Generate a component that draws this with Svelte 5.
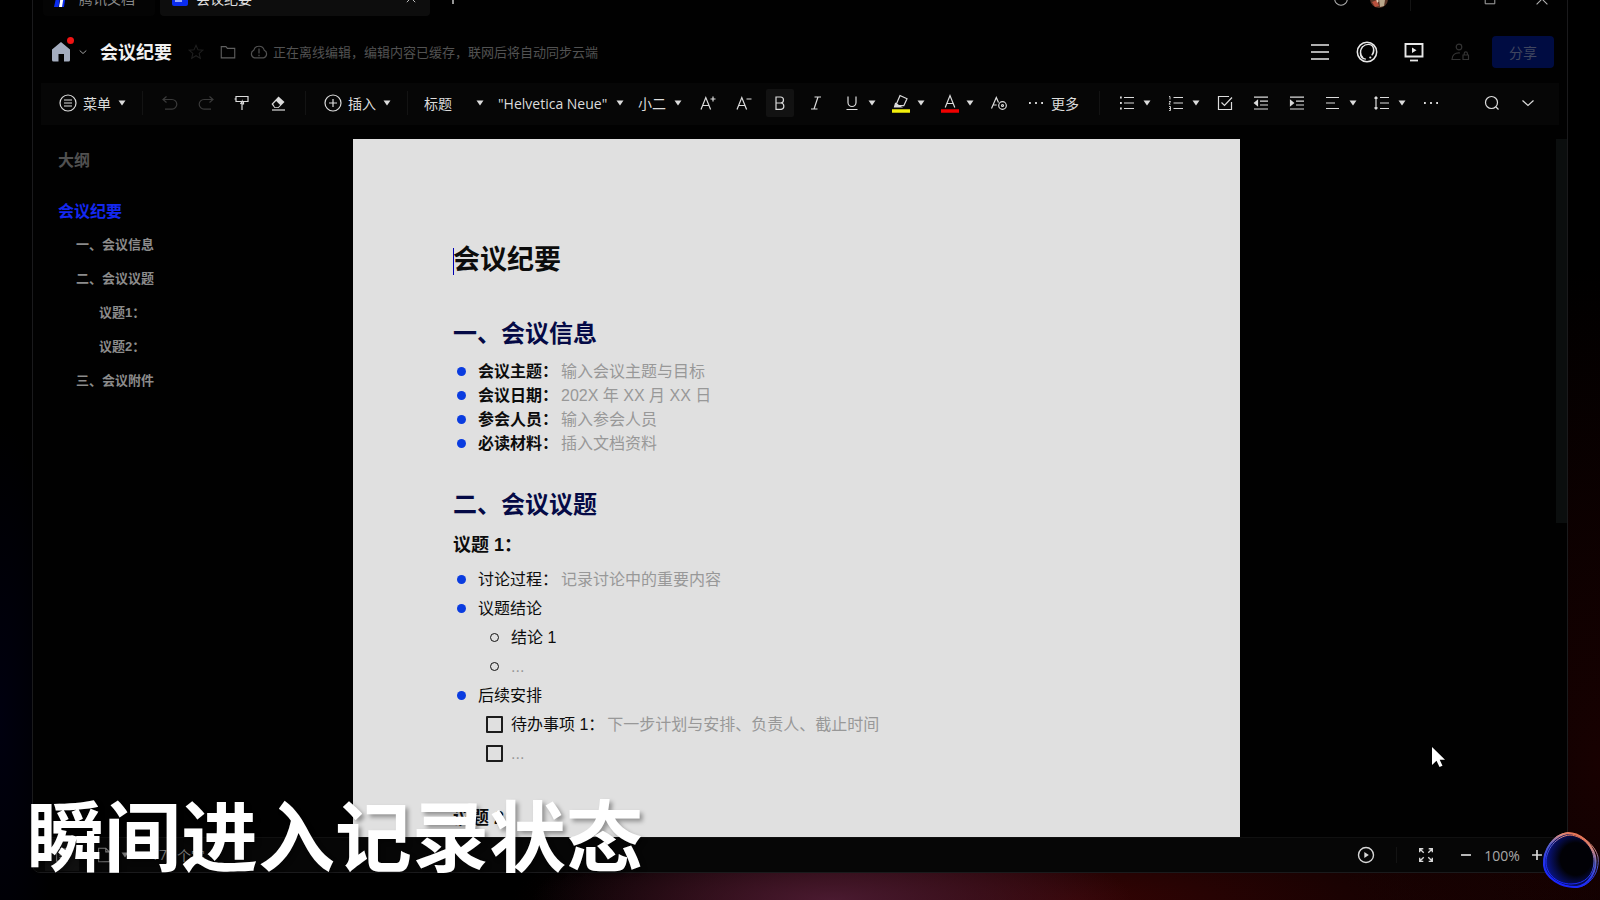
<script>
  // stroke icons on a 20 x 20 grid
  const icons = {
    menu: '<circle cx="10" cy="10" r="8"/><path d="M6 7h8M6 10h8M6 13h8"/>',
    undo: '<path d="M6.5 3.5 3 6.5l3.5 3M3 6.5h9a4.8 4.8 0 0 1 0 9.6H5"/>',
    redo: '<path d="m13.500 3.500 3.500 3-3.500 3M17 6.500H8a4.800 4.800 0 0 0 0 9.600h7"/>',
    painter: '<path d="M4 3.500h12v5H4zM4 6H2.500M10 8.500h3M8.500 11l1.500-2.500V17M10 11h1.500v-2"/>',
    eraser: '<path d="m3.500 11 7-7.500 6 5.500-6 6H6.500z" fill="currentColor" stroke="none"/><path d="m5.200 11 3-3 4 4-2.200 2.200H7z" fill="#060606" stroke="none"/><path d="M4 17h13"/>',
    insert: '<circle cx="10" cy="10" r="8"/><path d="M10 6v8M6 10h8"/>',
    fontUp: '<path d="m3 16.500 4.800-12 4.800 12M4.700 12.500h6.300M12.500 6h5M15 3.500v5"/>',
    fontDown: '<path d="m3 16.500 4.800-12 4.800 12M4.700 12.500h6.300M12.500 6h5"/>',
    bold: '<path d="M6 4h4.500a3 3 0 0 1 0 6H6zM6 10h5.200a3.200 3.200 0 0 1 0 6.300H6z"/>',
    italic: '<path d="M8.500 4H15M5 16h6.500M12 4 8 16"/>',
    underline: '<path d="M6 3.500v6a4 4 0 0 0 8 0v-6M4.500 16.500h11"/>',
    highlight: '<path d="m9 2.500 7 3.200-3.200 7H6.500l-1-2z"/><path d="M4.500 10.500 10 14H3.500z" fill="currentColor"/><path d="M1 18h18" stroke="#f2ef0c" stroke-width="3.500"/>',
    color: '<path d="m5.200 14.500 4.800-12 4.800 12M7 10.500h6"/><path d="M1 18h18" stroke="#f00000" stroke-width="3.500"/>',
    fontSet: '<path d="m2.500 15.500 4.800-11 2.200 5M4.200 12h3.500"/><circle cx="13.500" cy="12.500" r="3.800"/><circle cx="13.500" cy="12.500" r="1"/>',
    dots: '<path d="M3 10h1.800M9.100 10h1.800M15.200 10H17" stroke-width="1.800"/>',
    bullets: '<path d="M7 4.500h10M7 10h10M7 15.500h10"/><path d="M3 4.500h1.800M3 10h1.800M3 15.500h1.800" stroke-width="1.800"/>',
    numbers: '<path d="M7.500 4.500H17M7.500 10H17M7.500 15.500H17"/><path d="M3 3.500h1v3M3 8.500h1.500L3 11.200h1.500M3 13.500h1.500v4H3M3 15.500h1.500" stroke-width=".9"/>',
    check: '<path d="M16.500 9v7.500h-13v-13H14"/><path d="m6.500 9.500 3 3 7.500-8"/>',
    outdent: '<path d="M3 4.200h14M9 8.200h8M9 12h8M3 16h14"/><path d="M6.500 7.500v5L3.500 10z" fill="currentColor"/>',
    indent: '<path d="M3 4.200h14M9 8.200h8M9 12h8M3 16h14"/><path d="M3.500 7.500v5l3-2.500z" fill="currentColor"/>',
    align: '<path d="M3 4.500h13M3 10h9M3 15.500h13"/>',
    spacing: '<path d="M8 4.500h9M8 10h9M8 15.500h9M4 4v12M2.500 5.500 4 3.800l1.500 1.700M2.500 14.500 4 16.200l1.500-1.700"/>',
    search: '<circle cx="9.500" cy="9.500" r="6"/><path d="m14 14 2.500 2.500"/>',
    down: '<path d="m4.500 7.500 5.500 5 5.500-5"/>',
    star: '<path d="m10 2.500 2.200 5 5.400.5-4.100 3.600 1.300 5.400-4.800-2.900L5.200 17l1.300-5.400L2.400 8l5.400-.5z"/>',
    folder: '<path d="M2.500 4h5.200l1.600 2h8.200v10.500h-15z"/>',
    cloud: '<path d="M5.500 15.800a4 4 0 0 1-.8-7.500 5.500 5.500 0 0 1 10.600 0 4 4 0 0 1-.8 7.500zM10 6.500v5M10 12.800v1.400"/>',
    lines: '<path d="M1 3h18M1 10h18M1 17h18" stroke-width="1.600"/>',
    assistant: '<circle cx="10" cy="10" r="8.800" stroke-width="1.400"/><path d="M9 16.500c-4 0-5-2.500-5-5.500 0-4.500 3-8 7-8 3.500 0 5 2.300 5 5 0 2-.7 3.700-1.600 5M6 5C3.500 8 3.500 13 6.500 15.500M15.500 5.500c1 2 .8 4.500-.2 6.500" stroke-width="1.200"/><circle cx="13" cy="15" r="1" fill="currentColor" stroke="none"/>',
    present: '<path d="M1.500 2h17v12.500h-17z" stroke-width="1.900"/><path d="M8 5.500v5.500l4.500-2.700z" fill="currentColor" stroke="none"/><path d="M6 18.500h8" stroke-width="1.800"/>',
    person: '<circle cx="9" cy="5" r="2.800"/><path d="M10 11C5 10.500 2 13 2 17.500h8.500"/><path d="M13 13h5.500v4.500H13zM14.200 13v-1.500a1.600 1.600 0 0 1 3.200 0V13"/>',
    play: '<circle cx="10" cy="10" r="7.500" stroke-width="1.400"/><path d="M8.300 7v6l4.500-3z" fill="currentColor" stroke="none"/>',
    expand: '<path d="M3 7V3h4M13 3h4v4M17 13v4h-4M7 17H3v-4M3.500 3.500 7.500 7.500M16.500 3.500l-4 4M16.500 16.500l-4-4M3.500 16.500l4-4" stroke-width="1.500"/>',
    minus: '<path d="M4.500 10h11" stroke-width="1.900"/>',
    plus: '<path d="M4.500 10h11M10 4.500v11" stroke-width="1.900"/>',
    close: '<path d="m4 4 12 12M16 4 4 16"/>',
    ring: '<circle cx="10" cy="10" r="7"/>',
    square: '<path d="M4 4h12v12H4z"/>',
    outline: '<path d="M4 3h12v14H4zM7 7h6M7 10h6M7 13h6"/>',
    file: '<path d="M4 2.500h8l4 4v11H4zM12 2.500v4h4"/>'
  };

  const listTools = [
    { icon: 'bullets', label: '项目符号', menu: true },
    { icon: 'numbers', label: '编号', menu: true },
    { icon: 'check', label: '待办' },
    { icon: 'outdent', label: '减少缩进' },
    { icon: 'indent', label: '增加缩进' },
    { icon: 'align', label: '对齐', menu: true },
    { icon: 'spacing', label: '行距', menu: true },
    { icon: 'dots', label: '更多段落' }
  ];

  const charTools = [
    { icon: 'fontUp', label: '增大字号' },
    { icon: 'fontDown', label: '减小字号' },
    { icon: 'bold', label: '加粗', active: true },
    { icon: 'italic', label: '斜体' },
    { icon: 'underline', label: '下划线', menu: true },
    { icon: 'highlight', label: '高亮', menu: true },
    { icon: 'color', label: '字体颜色', menu: true },
    { icon: 'fontSet', label: '字体设置' }
  ];

  const outline = [
    { text: '会议纪要', level: 1 },
    { text: '一、会议信息', level: 2 },
    { text: '二、会议议题', level: 2 },
    { text: '议题1：', level: 3 },
    { text: '议题2：', level: 3 },
    { text: '三、会议附件', level: 2 }
  ];

  const info = [
    { name: '会议主题：', hint: '输入会议主题与目标' },
    { name: '会议日期：', hint: '202X 年 XX 月 XX 日' },
    { name: '参会人员：', hint: '输入参会人员' },
    { name: '必读材料：', hint: '插入文档资料' }
  ];

  let zoom = $state(100);
</script>

{#snippet icon(name, size = 20)}
  <svg class="icon" width={size} height={size} viewBox="0 0 20 20" fill="none" stroke="currentColor" stroke-width="1.2" aria-hidden="true">{@html icons[name]}</svg>
{/snippet}

{#snippet caret()}
  <svg class="caret" width="8" height="6" viewBox="0 0 8 6" aria-hidden="true"><path d="M.5.500h7L4 5.500z" fill="currentColor" /></svg>
{/snippet}

{#snippet tool(t)}
  <button class="tool" class:menu={t.menu} class:active={t.active} aria-label={t.label}>
    <span class="face">{@render icon(t.icon)}</span>
    {#if t.menu}{@render caret()}{/if}
  </button>
{/snippet}

<div class="stage">
  <div class="window">
    <div class="titlebar">
      <button class="tab home-tab">
        <svg width="18" height="18" viewBox="0 0 18 18" aria-hidden="true"><path d="M4 0h13l-1 5h-3l-2 13H6L8 6H3z" fill="#0a2cf0" /><path d="M8 6h3L9 18H6z" fill="#fff" /><path d="M3 9h4L5.500 18H1z" fill="#0a2cf0" /></svg>
        腾讯文档
      </button>
      <div class="tab current">
        <svg width="16" height="16" viewBox="0 0 16 16" aria-hidden="true"><rect width="16" height="16" rx="2" fill="#0a2cf0" /><path d="M3 6h10M3 11h7" stroke="#c8d4ff" stroke-width="1.500" /></svg>
        <span>会议纪要</span>
        <button class="plain" aria-label="关闭标签">{@render icon('close', 14)}</button>
      </div>
      <button class="plain add" aria-label="新标签">{@render icon('plus', 18)}</button>
      <div class="controls">
        <button class="plain" aria-label="消息">{@render icon('ring', 18)}</button>
        <svg class="avatar" width="18" height="18" viewBox="0 0 18 18" aria-hidden="true"><circle cx="9" cy="9" r="9" fill="#5a3426" /><path d="M2 12l5-2 2 6-4 1z" fill="#b8503c" /><path d="M9 9l6 1-1 6-4 1z" fill="#b9a68a" /><path d="M6 8l3 3-2 2z" fill="#e0d0b8" /></svg>
        <i class="rule"></i>
        <button class="plain maximize" aria-label="最大化">{@render icon('square', 16)}</button>
        <button class="plain" aria-label="关闭">{@render icon('close', 18)}</button>
      </div>
    </div>

    <header class="header">
      <button class="plain home" aria-label="首页">
        <svg width="20" height="20" viewBox="0 0 20 20" aria-hidden="true"><path d="M10 0 19 7.500V18a1.500 1.500 0 0 1-1.500 1.500H13V12H7.500v7.500h-5A1.500 1.500 0 0 1 1 18V7.500z" fill="#a4adbf" /></svg>
        <span class="dot"></span>
        {@render icon('down', 12)}
      </button>
      <h1 class="name">会议纪要</h1>
      <button class="plain star" aria-label="收藏">{@render icon('star', 18)}</button>
      <button class="plain folder" aria-label="移动到">{@render icon('folder', 18)}</button>
      <p class="sync">{@render icon('cloud', 20)}正在离线编辑，编辑内容已缓存，联网后将自动同步云端</p>
      <div class="actions">
        <button class="plain" aria-label="文档菜单">{@render icon('lines')}</button>
        <button class="plain" aria-label="智能助手">{@render icon('assistant', 22)}</button>
        <button class="plain" aria-label="演示">{@render icon('present')}</button>
        <button class="plain dim" aria-label="权限">{@render icon('person')}</button>
        <button class="share">分享</button>
      </div>
    </header>

    <div class="toolbar">
      <button class="wide">{@render icon('menu')}<span>菜单</span>{@render caret()}</button>
      <i class="rule"></i>
      <div class="group">
        <button class="tool faint" aria-label="撤销"><span class="face">{@render icon('undo')}</span></button>
        <button class="tool faint" aria-label="重做"><span class="face">{@render icon('redo')}</span></button>
        {@render tool({ icon: 'painter', label: '格式刷' })}
        {@render tool({ icon: 'eraser', label: '清除格式' })}
      </div>
      <i class="rule"></i>
      <button class="wide">{@render icon('insert')}<span>插入</span>{@render caret()}</button>
      <i class="rule"></i>
      <label class="pick style"><select aria-label="样式"><option>标题</option></select>{@render caret()}</label>
      <label class="pick family"><select aria-label="字体"><option>"Helvetica Neue"</option></select>{@render caret()}</label>
      <label class="pick size"><select aria-label="字号"><option>小二</option></select>{@render caret()}</label>
      <div class="group">
        {#each charTools as t}{@render tool(t)}{/each}
        <button class="more">{@render icon('dots')}<span>更多</span></button>
      </div>
      <i class="rule"></i>
      <div class="group">
        {#each listTools as t}{@render tool(t)}{/each}
      </div>
      <div class="group end">
        {@render tool({ icon: 'search', label: '查找' })}
        {@render tool({ icon: 'down', label: '收起' })}
      </div>
    </div>

    <main class="body">
      <nav class="outline">
        <h2>大纲</h2>
        <ul>
          {#each outline as item}
            <li class="level{item.level}"><a href="#top">{item.text}</a></li>
          {/each}
        </ul>
      </nav>

      <article class="page">
        <h1>会议纪要</h1>
        <h2>一、会议信息</h2>
        <ul class="info">
          {#each info as row}
            <li><b>{row.name}</b><span class="hint">{row.hint}</span></li>
          {/each}
        </ul>
        <h2>二、会议议题</h2>
        <h3>议题 1：</h3>
        <ul class="topic">
          <li>讨论过程：<span class="hint">记录讨论中的重要内容</span></li>
          <li>议题结论
            <ul class="hollow">
              <li>结论 1</li>
              <li><span class="blank">...</span></li>
            </ul>
          </li>
          <li>后续安排
            <ul class="todo">
              <li><label><input type="checkbox" />待办事项 1：<span class="hint">下一步计划与安排、负责人、截止时间</span></label></li>
              <li><label><input type="checkbox" /><span class="blank">...</span></label></li>
            </ul>
          </li>
        </ul>
        <h3 class="next">议题 2：</h3>
      </article>

      <div class="gutter"><div class="thumb"></div></div>
    </main>

    <footer class="status">
      <button class="plain tile" aria-label="大纲">{@render icon('outline', 18)}</button>
      <button class="plain file" aria-label="页面视图">{@render icon('file', 18)}{@render caret()}</button>
      <p class="count"><span>17</span><span>个字</span></p>
      <div class="view">
        <button class="plain" aria-label="播放">{@render icon('play')}</button>
        <i class="rule"></i>
        <button class="plain expand" aria-label="全屏">{@render icon('expand', 18)}</button>
        <button class="plain" aria-label="缩小" onclick={() => (zoom -= 10)}>{@render icon('minus', 18)}</button>
        <span class="zoom">{zoom}%</span>
        <button class="plain" aria-label="放大" onclick={() => (zoom += 10)}>{@render icon('plus', 18)}</button>
      </div>
    </footer>
  </div>

  <svg class="pointer" width="16" height="24" viewBox="0 0 16 24" aria-hidden="true"><path d="M1 1v18l4.500-4.200L8.500 21l3-1.300-2.800-6H14z" fill="#fff" /></svg>

  <svg class="orb" width="60" height="60" viewBox="0 0 60 60" fill="none" aria-hidden="true">
    <defs>
      <linearGradient id="rim" x1=".75" y1="0" x2=".35" y2="1">
        <stop offset="0" stop-color="#f0683a" />
        <stop offset=".18" stop-color="#d88a80" />
        <stop offset=".4" stop-color="#5a62c8" />
        <stop offset=".7" stop-color="#2434f0" />
        <stop offset="1" stop-color="#1824ff" />
      </linearGradient>
      <radialGradient id="core" cx=".62" cy=".48" r=".6">
        <stop offset=".5" stop-color="#010106" />
        <stop offset="1" stop-color="#0a1690" />
      </radialGradient>
    </defs>
    <path d="M28 3C39 3 51 12 55 26c3 15-6 29-18 31C21 58 5 48 4 35 3 19 14 5 28 3z" fill="url(#core)" stroke="url(#rim)" stroke-width="2" />
    <path d="M26 3C40 3 55 14 58 27c2 15-8 30-22 30C19 57 3 45 4 33 5 16 14 5 26 3z" stroke="url(#rim)" stroke-width="1" />
    <path d="M30 5c13 1 24 12 24 26S45 54 31 54 6 44 6 32 16 6 30 5z" stroke="url(#rim)" stroke-width="1" />
  </svg>

  <p class="caption">瞬间进入记录状态</p>
</div>

<style>
  :global(body) {
    margin: 0;
    background: #000;
  }
  .stage {
    position: relative;
    display: flex;
    height: 100vh;
    overflow: hidden;
    box-sizing: border-box;
    padding: 0 32px 27px;
    background:
      radial-gradient(ellipse 300px 70px at 52% 100%, #4a1a30 0%, transparent 100%),
      radial-gradient(ellipse 560px 110px at 67% 100%, #340404 0%, transparent 100%),
      radial-gradient(ellipse 260px 500px at 100% 85%, #180101 0%, transparent 100%),
      radial-gradient(ellipse 60px 300px at 0% 80%, #00000f 0%, transparent 100%),
      #000;
    color: #dcdcdc;
    font-family: "Open Sans", "Noto Sans CJK SC", sans-serif;
    font-size: 14px;
  }
  .window {
    flex: 1;
    min-width: 0;
    display: flex;
    flex-direction: column;
    margin-top: -20px;
    border: 1px solid #1a1a1c;
    border-radius: 8px;
    background: #010101;
    overflow: hidden;
  }
  h1, h2, h3, ul, p {
    margin: 0;
    padding: 0;
  }
  ul {
    list-style: none;
  }
  button, select {
    padding: 0;
    border: none;
    background: none;
    color: inherit;
    font: inherit;
  }
  .icon, .caret {
    display: block;
    flex: none;
  }
  .plain {
    display: flex;
    align-items: center;
    justify-content: center;
  }
  .rule {
    flex: none;
    width: 1px;
    height: 24px;
    background: #131313;
  }

  .titlebar {
    flex: none;
    display: flex;
    height: 35px;
    color: #b0b0b0;
  }
  .tab {
    display: flex;
    align-items: center;
    gap: 8px;
    box-sizing: border-box;
    padding: 0 12px 2px;
    border-radius: 0 0 4px 4px;
  }
  .home-tab {
    width: 112px;
    margin-left: 10px;
    padding-left: 10px;
    padding-right: 0;
    background: #040404;
    color: #8a8a8a;
    white-space: nowrap;
  }
  .current {
    width: 270px;
    margin-left: 5px;
    background: #0d0d0d;
    color: #e0e0e0;
  }
  .current .plain {
    margin-left: auto;
  }
  .add {
    margin-left: 14px;
  }
  .controls {
    display: flex;
    align-items: center;
    margin-left: auto;
    padding-right: 16px;
  }
  .avatar {
    margin: 0 22px 0 20px;
  }
  .maximize {
    margin: 0 35px 0 71px;
  }

  .header {
    flex: none;
    display: flex;
    align-items: center;
    height: 63px;
    padding: 4px 13px 0 18px;
  }
  .home {
    position: relative;
    gap: 6px;
  }
  .dot {
    position: absolute;
    top: -5px;
    left: 16px;
    width: 7px;
    height: 7px;
    border-radius: 50%;
    background: #f01414;
  }
  .name {
    margin-left: 11px;
    color: #f0f0f0;
    font-size: 18px;
    line-height: 24px;
  }
  .star {
    margin-left: 15px;
    color: #1e1e1e;
  }
  .folder {
    margin-left: 14px;
    color: #606060;
  }
  .sync {
    display: flex;
    align-items: center;
    gap: 4px;
    margin-left: 12px;
    color: #525252;
    font-size: 13px;
    white-space: nowrap;
  }
  .actions {
    display: flex;
    align-items: center;
    gap: 26px;
    margin-left: auto;
    color: #e8e8e8;
  }
  .dim {
    color: #333;
  }
  .share {
    width: 62px;
    height: 32px;
    margin-left: -4px;
    border-radius: 4px;
    background: #000c42;
    color: #40465f;
  }

  .toolbar {
    flex: none;
    display: flex;
    align-items: center;
    box-sizing: border-box;
    height: 42px;
    margin: 0 8px;
    padding: 0 13px 2px 17px;
    background: #060606;
  }
  .group {
    display: flex;
    align-items: center;
  }
  .tool {
    display: flex;
    align-items: center;
    width: 36px;
    height: 28px;
  }
  .tool.menu {
    width: 49px;
  }
  .face {
    display: flex;
    flex: none;
    align-items: center;
    justify-content: center;
    width: 28px;
    height: 28px;
    margin: 0 4px;
    border-radius: 2px;
  }
  .menu .face {
    margin-right: 2px;
  }
  .active .face {
    background: #121212;
  }
  .faint {
    color: #3a3a3a;
  }
  .wide {
    display: flex;
    align-items: center;
    gap: 5px;
    margin-right: 16px;
  }
  .wide .caret {
    margin-left: 2px;
  }
  .toolbar > .rule + .group {
    margin: 0 9px;
  }
  .toolbar > .rule + .wide {
    margin-left: 17px;
  }
  .pick {
    display: flex;
    align-items: center;
    justify-content: space-between;
  }
  .pick select {
    appearance: none;
    flex: 1;
    min-width: 0;
    outline: none;
  }
  .style {
    width: 60px;
    margin-left: 16px;
  }
  .family {
    width: 126px;
    margin-left: 14px;
  }
  .size {
    width: 44px;
    margin: 0 8px 0 14px;
  }
  .more {
    display: flex;
    align-items: center;
    gap: 5px;
    margin: 0 20px 0 9px;
  }
  .toolbar .end {
    margin-left: auto;
  }

  .body {
    flex: 1;
    min-height: 0;
    display: flex;
    padding-top: 14px;
    overflow: hidden;
  }
  .outline {
    flex: 0 0 320px;
    box-sizing: border-box;
    padding: 10px 0 0 25px;
    color: #8c8c8c;
    font-family: "Liberation Sans", "Noto Sans CJK SC", sans-serif;
    font-size: 13px;
    font-weight: bold;
  }
  .outline h2 {
    margin-bottom: 23px;
    color: #505050;
    font-size: 16px;
    line-height: 24px;
  }
  .outline li {
    line-height: 34px;
  }
  .outline a {
    color: inherit;
    text-decoration: none;
  }
  .outline .level1 {
    color: #1428f0;
    font-size: 16px;
    line-height: 32px;
  }
  .level2 {
    padding-left: 18px;
  }
  .level3 {
    padding-left: 41px;
  }

  .page {
    flex: 1;
    min-width: 0;
    padding: 101px 100px 0;
    background: #e0e0e0;
    color: #0c0c0c;
    font-family: "Liberation Sans", "Noto Sans CJK SC", sans-serif;
    font-size: 16px;
  }
  .page h1 {
    position: relative;
    font-size: 27px;
    line-height: 40px;
  }
  .page h1::before {
    content: "";
    position: absolute;
    top: 8px;
    left: 0;
    width: 1px;
    height: 27px;
    background: #0000b4;
  }
  .page h2 {
    margin: 36px 0 8px;
    color: #050a46;
    font-size: 24px;
    line-height: 36px;
  }
  .page ul + h2 {
    margin-top: 31px;
  }
  .page h3 {
    margin-bottom: 6px;
    font-size: 18px;
    line-height: 28px;
  }
  .page .next {
    margin-top: 36px;
  }
  .page li {
    position: relative;
    line-height: 29px;
  }
  .info > li, .topic > li {
    padding-left: 25px;
  }
  .page .info > li {
    line-height: 24px;
  }
  .info > li::before, .topic > li::before {
    content: "";
    position: absolute;
    top: 10px;
    left: 4px;
    width: 9px;
    height: 9px;
    border-radius: 50%;
    background: #0a3ce0;
  }
  .info > li::before {
    top: 7px;
  }
  .hollow > li {
    padding-left: 33px;
  }
  .hollow > li::before {
    content: "";
    position: absolute;
    top: 10px;
    left: 12px;
    width: 7px;
    height: 7px;
    border: 1px solid #111;
    border-radius: 50%;
  }
  .todo label {
    display: flex;
    align-items: center;
  }
  .todo input {
    appearance: none;
    box-sizing: border-box;
    width: 17px;
    height: 17px;
    margin: 0 8px;
    border: 2px solid #1c1c1c;
    border-radius: 1px;
  }
  .hint, .blank {
    color: #989898;
  }
  .hint {
    margin-left: 3px;
  }
  .gutter {
    flex: 0 0 327px;
  }
  .thumb {
    width: 11px;
    height: 55%;
    margin-left: auto;
    background: #0b0e0e;
  }

  .status {
    flex: none;
    display: flex;
    align-items: center;
    height: 34px;
    padding: 0 21px 0 12px;
    border-top: 1px solid #101010;
    background: #060606;
    color: #7a7a7a;
  }
  .tile {
    width: 34px;
    height: 32px;
    background: #101010;
  }
  .file {
    gap: 8px;
    margin-left: 16px;
  }
  .count {
    display: flex;
    gap: 10px;
    margin-left: 22px;
  }
  .view {
    display: flex;
    align-items: center;
    margin-left: auto;
    color: #d8d8d8;
  }
  .view .rule {
    height: 16px;
    margin: 0 20px;
  }
  .expand {
    margin-right: 22px;
  }
  .zoom {
    width: 38px;
    margin: 0 7px 0 8px;
    color: #a8a8a8;
    text-align: center;
  }

  .pointer {
    position: absolute;
    right: 153px;
    bottom: 130px;
  }
  .orb {
    position: absolute;
    right: 0;
    bottom: 10px;
  }
  .caption {
    position: absolute;
    left: 27px;
    bottom: 19px;
    color: #fff;
    font-family: "Noto Sans CJK SC", sans-serif;
    font-size: 77px;
    font-weight: bold;
    line-height: 96px;
    text-shadow: 3px 3px 4px rgba(0, 0, 0, 0.35);
    white-space: nowrap;
  }
</style>
